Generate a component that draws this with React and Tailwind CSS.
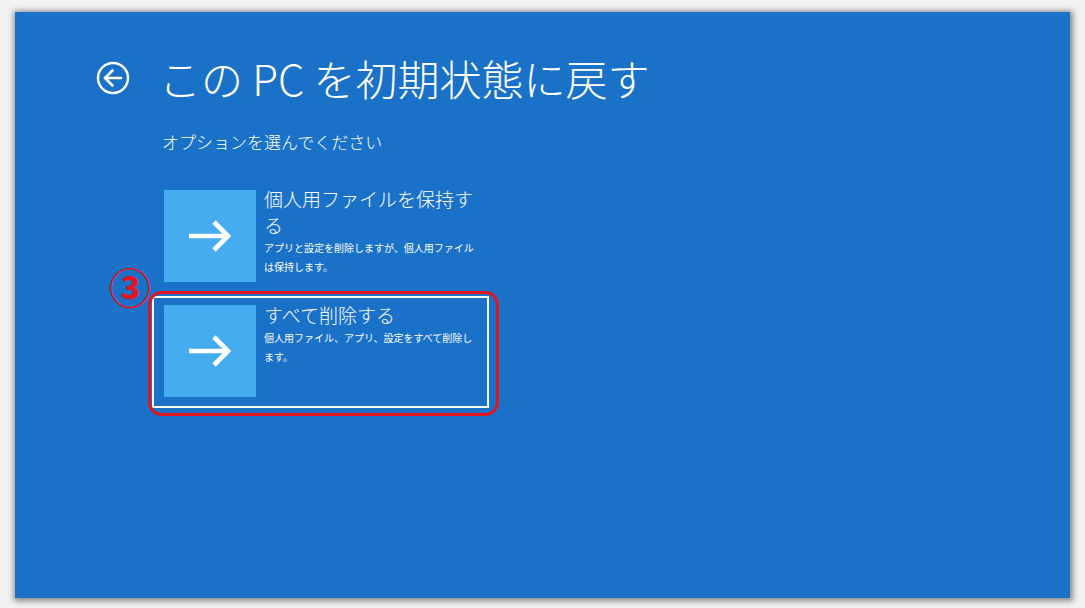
import React from "react";

const FONT = { fontFamily: '"Noto Sans CJK JP", "Noto Sans", sans-serif' };

function BackIcon() {
  return (
    <svg width="34" height="34" viewBox="0 0 34 34" fill="none">
      <circle cx="17" cy="17" r="15" stroke="white" strokeWidth="2.4" />
      <path d="M9 17H25" stroke="white" strokeWidth="2.6" strokeLinecap="round" />
      <path d="M16.5 9.5L9 17L16.5 24.5" stroke="white" strokeWidth="2.6" strokeLinecap="round" strokeLinejoin="round" />
    </svg>
  );
}

function ArrowIcon() {
  return (
    <svg width="44" height="34" viewBox="0 0 44 34" fill="none">
      <path d="M1 17H39" stroke="white" strokeWidth="4.6" />
      <path d="M26 3L40 17L26 31" stroke="white" strokeWidth="4.6" strokeLinejoin="miter" />
    </svg>
  );
}

function Card({ title, desc, selected, children, textOffset }) {
  return (
    <div
      className={
        "relative flex w-[337px] h-[112px] border-2 pl-[10px] pr-[8px] pt-[7px] pb-[9px] gap-[8px] items-start " +
        (selected ? "border-white" : "border-transparent")
      }
    >
      <div className="w-[92px] h-[92px] shrink-0 bg-[#45adef] flex items-center justify-center">
        <ArrowIcon />
      </div>
      <div className={"w-[215px] text-white " + textOffset}>
        <div className="text-[19px] leading-[26px] font-light">{title}</div>
        <div className="text-[10px] leading-[19px]">{desc}</div>
      </div>
      {children}
    </div>
  );
}

export default function App() {
  return (
    <div className="w-[1085px] h-[608px] bg-[#f2f2f2] pt-[12px] pl-[15px]" style={FONT}>
      <div className="w-[1055px] h-[586px] bg-[#1a71c8] shadow-[1px_1px_6px_2px_rgba(0,0,0,0.45)] flex flex-col">
        <div className="mt-[40px] ml-[81px] h-[52px] flex items-center gap-[29px]">
          <BackIcon />
          <div className="text-white text-[42px] font-light leading-none whitespace-nowrap">
            この PC を初期状態に戻す
          </div>
        </div>
        <div className="mt-[26px] ml-[147px] text-white text-[17px] leading-[24px] font-light">
          オプションを選んでください
        </div>
        <div className="mt-[27px] ml-[137px] flex flex-col gap-[3px]">
          <Card
            title="個人用ファイルを保持する"
            desc="アプリと設定を削除しますが、個人用ファイルは保持します。"
            textOffset="-mt-[4px]"
          />
          <Card
            title="すべて削除する"
            desc="個人用ファイル、アプリ、設定をすべて削除します。"
            selected
            textOffset="-mt-[3px]"
          >
            <div className="absolute left-[-6px] top-[-7px] w-[351px] h-[125px] border-[3px] border-[#e3141f] rounded-[14px] pointer-events-none" />
            <div className="absolute left-[-45px] top-[-33px] text-[#e3141f] text-[42px] leading-none font-bold">
              ③
            </div>
          </Card>
        </div>
      </div>
    </div>
  );
}
